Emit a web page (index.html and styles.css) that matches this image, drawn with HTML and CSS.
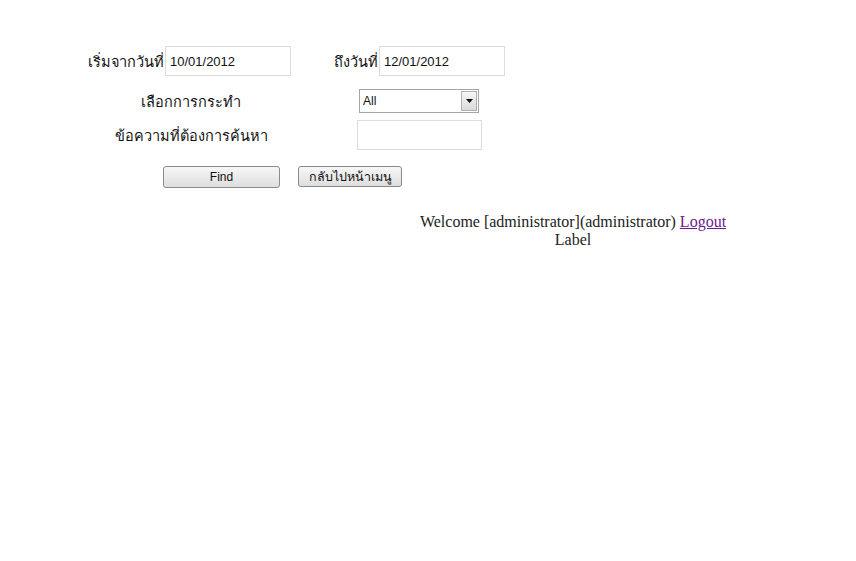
FILE: index.html
```html
<!DOCTYPE html>
<html lang="th">
<head>
  <meta charset="UTF-8" />
  <title>ค้นหาประวัติการใช้งาน</title>
  <link rel="stylesheet" href="styles.css">
</head>
<body>
  <form class="search-form">
    <div class="row row-dates">
      <label class="lbl lbl-from" for="dateFrom">เริ่มจากวันที่</label>
      <input type="text" id="dateFrom" class="txt" value="10/01/2012">
      <label class="lbl lbl-to" for="dateTo">ถึงวันที่</label>
      <input type="text" id="dateTo" class="txt" value="12/01/2012">
    </div>
    <div class="row row-action">
      <label class="lbl lbl-col" for="action">เลือกการกระทำ</label>
      <div class="select-wrap">
        <select id="action" class="sel">
          <option>All</option>
        </select>
        <span class="select-arrow">
          <svg width="7" height="4" viewBox="0 0 7 4"><path d="M0 0h7L3.5 4z" fill="#111"/></svg>
        </span>
      </div>
    </div>
    <div class="row row-keyword">
      <label class="lbl lbl-col" for="keyword">ข้อความที่ต้องการค้นหา</label>
      <input type="text" id="keyword" class="txt txt-keyword">
    </div>
    <div class="row row-buttons">
      <button type="button" class="btn btn-find">Find</button>
      <button type="button" class="btn btn-back">กลับไปหน้าเมนู</button>
    </div>
  </form>
  <div class="welcome">
    <div>Welcome [administrator](administrator) <a href="#">Logout</a></div>
    <div>Label</div>
  </div>
</body>
</html>
```

FILE: styles.css
```css
body {
  margin: 8px;
  background: #fff;
  color: #222;
  font-family: "Liberation Sans", Arial, sans-serif;
}
.search-form {
  margin: 38px 0 0 78px;
  font-size: 13px;
}
.row {
  display: flex;
  align-items: center;
}
.lbl {
  font-size: 14.5px;
  color: #111;
  white-space: nowrap;
}
.row-dates {
  height: 30px;
}
.lbl-from {
  width: 78px;
  margin-right: 1px;
  text-align: right;
}
.lbl-to {
  width: 87px;
  margin-right: 1px;
  text-align: right;
}
.txt {
  width: 126px;
  height: 30px;
  box-sizing: border-box;
  border: 1px solid #dcdcdc;
  padding: 0 4px;
  margin: 0;
  font-family: "Liberation Sans", Arial, sans-serif;
  font-size: 13px;
  color: #111;
}
.lbl-col {
  width: 210px;
  text-align: center;
}
.row-action {
  height: 24px;
  margin-top: 13px;
}
.select-wrap {
  position: relative;
  margin-left: 63px;
}
.sel {
  appearance: none;
  width: 120px;
  height: 24px;
  box-sizing: border-box;
  border: 1px solid #a5a5a5;
  padding: 0 3px;
  margin: 0;
  background: #fff;
  font-family: "Liberation Sans", Arial, sans-serif;
  font-size: 12px;
  color: #111;
}
.select-arrow {
  position: absolute;
  top: 2px;
  right: 2px;
  width: 16px;
  height: 20px;
  box-sizing: border-box;
  border: 1px solid #b0b0b0;
  background: linear-gradient(#f6f6f6, #dadada);
  display: flex;
  align-items: center;
  justify-content: center;
  pointer-events: none;
}
.row-keyword {
  height: 30px;
  margin-top: 7px;
}
.txt-keyword {
  width: 125px;
  margin-left: 61px;
}
.row-buttons {
  margin-top: 16px;
  align-items: flex-start;
}
.btn {
  height: 22px;
  box-sizing: border-box;
  border: 1px solid #8a8a8a;
  border-radius: 3px;
  background: linear-gradient(#f7f7f7, #dedede);
  font-family: "Liberation Sans", Arial, sans-serif;
  font-size: 12px;
  color: #111;
  padding: 0;
  cursor: pointer;
}
.btn-find {
  width: 117px;
  margin-left: 77px;
}
.btn-back {
  width: 104px;
  height: 21px;
  margin-left: 18px;
  font-size: 12.5px;
}
.welcome {
  margin: 25px 0 0 290px;
  text-align: center;
  font-family: "Liberation Serif", "Times New Roman", serif;
  font-size: 16px;
  line-height: 18px;
  color: #222;
}
.welcome a {
  color: #6a1b8f;
}
```
